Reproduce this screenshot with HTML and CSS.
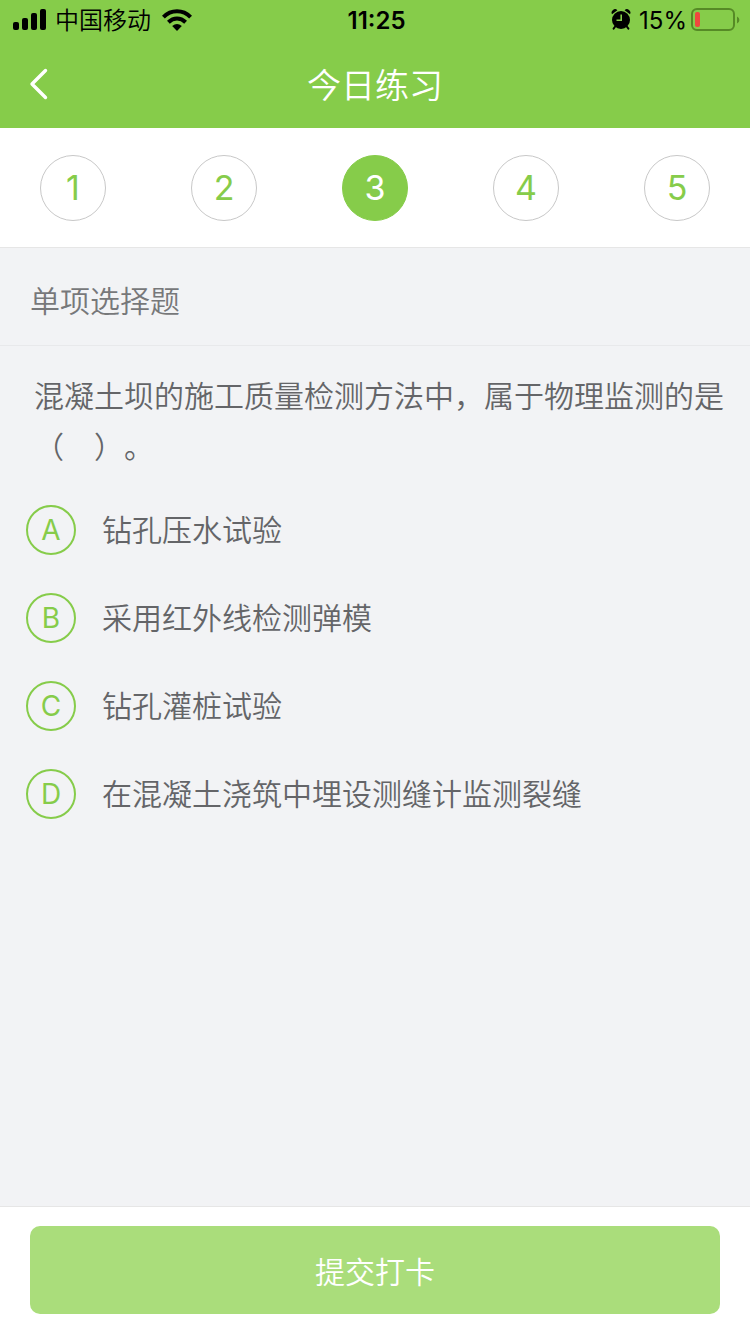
FILE: index.html
```html
<!DOCTYPE html>
<html lang="zh-CN">
<head>
    <meta charset="UTF-8">
    <meta name="viewport" content="width=device-width, initial-scale=1.0">
    <title>今日练习</title>
    <link rel="stylesheet" href="styles.css">
</head>
<body>

    <header class="header">
        <div class="status-bar">
            <div class="status-left">
                <svg width="34" height="22" viewBox="0 0 34 22" aria-hidden="true">
                    <rect x="0" y="13" width="6" height="8" rx="2"/>
                    <rect x="9" y="9" width="6" height="12" rx="2"/>
                    <rect x="18" y="4" width="6" height="17" rx="2"/>
                    <rect x="27" y="0" width="6" height="21" rx="2"/>
                </svg>
                <span class="carrier">中国移动</span>
                <svg width="30" height="22" viewBox="0 0 30 22" aria-hidden="true">
                    <g fill="none" stroke="#000" stroke-width="4">
                        <path d="M1.4 8.2C9 .4 21 .4 28.6 8.2"/>
                        <path d="M6.4 13.2C11.5 8.3 18.5 8.3 23.6 13.2"/>
                    </g>
                    <path d="M10.2 17Q15 13 19.8 17L15 22Z"/>
                </svg>
            </div>
            <span class="time">11:25</span>
            <div class="status-right">
                <svg width="20" height="22" viewBox="0 0 20 22" aria-hidden="true">
                    <path d="M1 5.2A3.4 3.4 0 0 1 6.4 1.2ZM19 5.2A3.4 3.4 0 0 0 13.6 1.2Z"/>
                    <circle cx="10" cy="11" r="9"/>
                    <path d="M4.2 17.5L2.6 19.6M15.8 17.5L17.4 19.6" stroke="#000" stroke-width="2" stroke-linecap="round"/>
                    <path d="M10.2 5.5V11.2H5.5" fill="none" stroke="#86cc4a" stroke-width="1.6"/>
                </svg>
                <span class="percent">15%</span>
                <svg width="49" height="24" viewBox="0 0 49 24" aria-hidden="true">
                    <rect x="1" y="1" width="42" height="21" rx="5" fill="none" stroke="#568a26" stroke-width="2"/>
                    <rect x="4" y="4" width="5" height="15" rx="2" fill="#f0483e"/>
                    <path d="M46 8.5Q48.4 9.5 48.4 12T46 15.5Z" fill="#568a26"/>
                </svg>
            </div>
        </div>
        <div class="nav-bar">
            <button class="back" type="button" aria-label="返回">
                <svg width="20" height="32" viewBox="0 0 20 32" aria-hidden="true">
                    <path d="M16.5 2.5L3 16L16.5 29.5" fill="none" stroke="#fff" stroke-width="3.4" stroke-linecap="round" stroke-linejoin="round"/>
                </svg>
            </button>
            <h1 class="title">今日练习</h1>
        </div>
    </header>

    <nav class="steps">
        <button class="step" type="button">1</button>
        <button class="step" type="button">2</button>
        <button class="step active" type="button" aria-current="step">3</button>
        <button class="step" type="button">4</button>
        <button class="step" type="button">5</button>
    </nav>

    <main class="content">
        <h2 class="question-type">单项选择题</h2>
        <form class="question" id="question">
            <p class="question-text" id="question-text">混凝土坝的施工质量检测方法中，属于物理监测的是（　）。</p>
            <div class="options" role="radiogroup" aria-labelledby="question-text">
                <label class="option">
                    <span class="mark"><input type="radio" name="answer" value="A"><span>A</span></span>
                    <span>钻孔压水试验</span>
                </label>
                <label class="option">
                    <span class="mark"><input type="radio" name="answer" value="B"><span>B</span></span>
                    <span>采用红外线检测弹模</span>
                </label>
                <label class="option">
                    <span class="mark"><input type="radio" name="answer" value="C"><span>C</span></span>
                    <span>钻孔灌桩试验</span>
                </label>
                <label class="option">
                    <span class="mark"><input type="radio" name="answer" value="D"><span>D</span></span>
                    <span>在混凝土浇筑中埋设测缝计监测裂缝</span>
                </label>
            </div>
        </form>
    </main>

    <footer class="footer">
        <button class="submit" type="submit" form="question">提交打卡</button>
    </footer>

</body>
</html>
```
FILE: styles.css
```css
* {
    box-sizing: border-box;
}
body {
    margin: 0;
    min-height: 100vh;
    display: flex;
    flex-direction: column;
    font-family: Inter, "Noto Sans CJK SC", sans-serif;
    font-weight: 350;
    font-size: 30px;
    color: #646568;
    background: #f2f3f5;
}
button {
    font: inherit;
    border: none;
    padding: 0;
    cursor: pointer;
}
svg {
    display: block;
}

/* header */
.header {
    background: #86cc4a;
}
.status-bar {
    display: grid;
    grid-template-columns: 1fr auto 1fr;
    align-items: center;
    height: 40px;
    padding: 0 10px 0 13px;
    font-size: 24px;
    line-height: 38px;
    color: #000;
}
.status-left,
.status-right {
    display: flex;
    align-items: center;
}
.status-left {
    gap: 8px;
}
.carrier {
    margin-right: 3px;
    padding-top: 2px;
}
.status-right {
    justify-content: flex-end;
}
.time {
    font-weight: 600;
    padding-top: 2px;
}
.percent {
    margin: 0 4px 0 8px;
    padding-top: 2px;
    font-weight: 400;
}
.nav-bar {
    display: grid;
    grid-template-columns: 88px 1fr 88px;
    align-items: center;
    height: 88px;
}
.back {
    display: flex;
    align-items: center;
    height: 88px;
    padding-left: 29px;
    background: none;
}
.title {
    margin: 0;
    padding-bottom: 2px;
    text-align: center;
    font-size: 34px;
    font-weight: 350;
    color: #fff;
}

/* question numbers */
.steps {
    display: flex;
    justify-content: space-between;
    align-items: center;
    height: 120px;
    padding: 0 40px;
    background: #fff;
    border-bottom: 1px solid #e6e6e6;
}
.step {
    width: 66px;
    height: 66px;
    border: 1px solid #c8c8c8;
    border-radius: 50%;
    background: #fff;
    color: #86cc4a;
    font-size: 34px;
    font-weight: 400;
}
.step.active {
    background: #86cc4a;
    border-color: #86cc4a;
    color: #fff;
}

/* question */
.content {
    flex: 1;
}
.question-type {
    margin: 0;
    padding: 10px 30px 0;
    font-size: 30px;
    font-weight: 350;
    line-height: 87px;
    color: #77787a;
    border-bottom: 1px solid #e8e9eb;
}
.question {
    padding: 25px 26px;
}
.question-text {
    margin: 0 0 32px;
    padding-left: 8px;
    line-height: 51px;
    text-spacing-trim: space-all;
}
.options {
    display: grid;
    gap: 38px;
}
.option {
    display: flex;
    align-items: center;
    gap: 26px;
    line-height: 50px;
    cursor: pointer;
}
.mark {
    display: grid;
    flex: none;
    width: 50px;
    height: 50px;
    place-items: center;
    color: #86cc4a;
    font-size: 28px;
    font-weight: 400;
}
.mark > * {
    grid-area: 1 / 1;
}
.mark input {
    appearance: none;
    width: 50px;
    height: 50px;
    margin: 0;
    border: 2px solid #86cc4a;
    border-radius: 50%;
    cursor: pointer;
}
.mark input:checked {
    background: #86cc4a;
}
.mark input:checked + span {
    color: #fff;
    z-index: 1;
}

/* submit */
.footer {
    padding: 19px 30px 20px;
    background: #fff;
    border-top: 1px solid #e6e6e6;
}
.submit {
    display: block;
    width: 100%;
    height: 88px;
    border-radius: 10px;
    background: #aadd7b;
    color: #fff;
}
```
